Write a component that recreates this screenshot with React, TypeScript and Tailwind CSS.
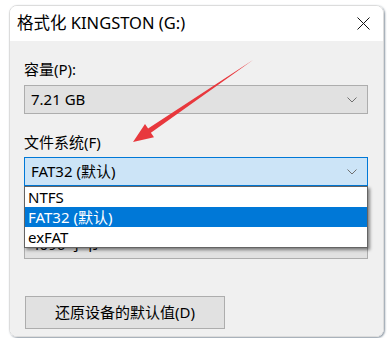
import React from "react";

const font = { fontFamily: '"Noto Sans", "Noto Sans CJK SC", sans-serif' };

function Chevron() {
  return (
    <svg width="10" height="6" viewBox="0 0 10 6" className="shrink-0">
      <path d="M0.5 0.5 L5 5 L9.5 0.5" fill="none" stroke="#707070" strokeWidth="1" />
    </svg>
  );
}

function Combo({ value, active }: { value: string; active?: boolean }) {
  return (
    <div
      className={
        active
          ? "h-[29px] flex items-center justify-between pl-[6px] pr-[10px] border border-[#0078d7] bg-[#cce4f7] text-[15px] text-black"
          : "h-[29px] flex items-center justify-between pl-[6px] pr-[10px] border border-[#adadad] bg-[#e1e1e1] text-[15px] text-black"
      }
    >
      <span>{value}</span>
      <Chevron />
    </div>
  );
}

const options = ["NTFS", "FAT32 (默认)", "exFAT"];

export default function App() {
  return (
    <div className="w-[390px] h-[338px] bg-white overflow-hidden relative" style={font}>
      <div className="ml-[9px] mt-[5px] w-[375px] h-[332px] rounded-lg overflow-hidden border border-[#dcdcdc] shadow-[1px_1px_2px_rgba(60,80,100,0.6)] flex flex-col">
        {/* title bar */}
        <div className="h-[35px] bg-white flex items-center justify-between pl-[7px] pr-[13px] shrink-0">
          <span className="text-[16.5px] text-black">格式化 KINGSTON (G:)</span>
          <svg width="13" height="13" viewBox="0 0 13 13">
            <path d="M0.5 0.5 L12.5 12.5 M12.5 0.5 L0.5 12.5" stroke="#111" strokeWidth="1" />
          </svg>
        </div>

        {/* body */}
        <div className="flex-1 bg-[#f0f0f0] pl-[14px] pr-[15px]">
          <div className="mt-[18px] h-[20px] leading-[20px] text-[15px]">容量(P):</div>
          <div className="mt-[6px]">
            <Combo value="7.21 GB" />
          </div>

          <div className="mt-[18px] h-[20px] leading-[20px] text-[15px]">文件系统(F)</div>
          <div className="mt-[5px] relative z-10">
            <Combo value="FAT32 (默认)" active />
            <div className="absolute left-0 right-0 top-full bg-white border border-[#646464] shadow-[2px_2px_3px_rgba(0,0,0,0.45)]">
              {options.map((o, i) => (
                <div
                  key={o}
                  className={
                    i === 1
                      ? "h-[20px] leading-[20px] pl-[3px] text-[15px] bg-[#0078d7] text-white"
                      : "h-[20px] leading-[20px] pl-[3px] text-[15px] text-black"
                  }
                >
                  {o}
                </div>
              ))}
            </div>
          </div>

          <div className="mt-[18px] h-[20px] leading-[20px] text-[15px]">分配单元大小(A)</div>
          <div className="mt-[6px]">
            <Combo value="4096 字节" />
          </div>

          <button className="mt-[37px] ml-[1px] w-[200px] h-[33px] border border-[#adadad] bg-[#e1e1e1] text-[15px] text-black">
            还原设备的默认值(D)
          </button>
        </div>
      </div>

      {/* annotation arrow */}
      <svg className="absolute inset-0 pointer-events-none z-20" width="390" height="338">
        <polygon
          points="133,142 145,124 148.1,128.6 253,60 150.9,132.8 154,137.3"
          fill="#e8383d"
        />
      </svg>
    </div>
  );
}
